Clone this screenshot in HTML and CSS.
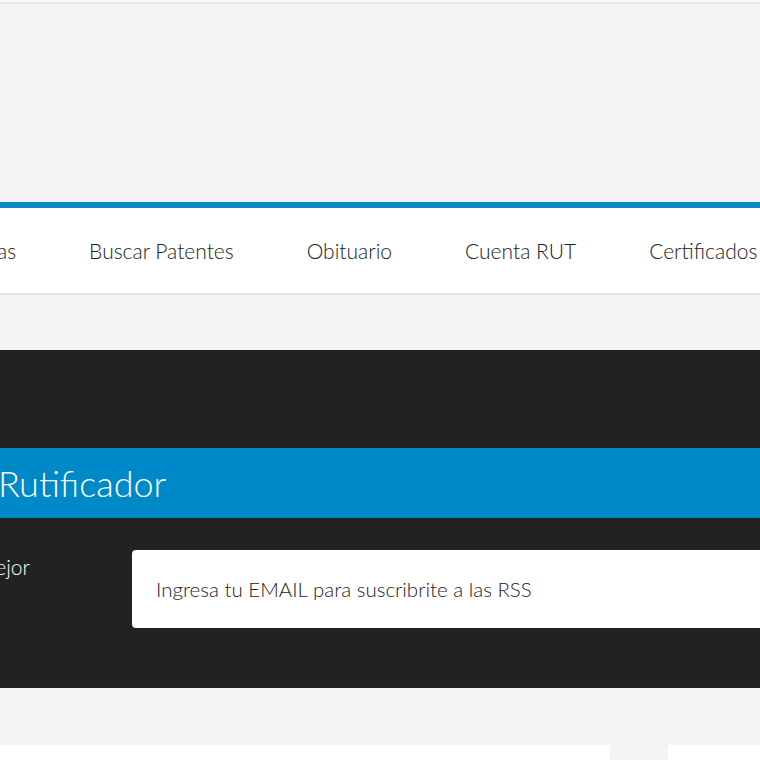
FILE: index.html
```html
<!DOCTYPE html>
<html lang="es">
<head>
<meta charset="utf-8">
<title>Rutificador</title>
<link rel="stylesheet" href="styles.css">
</head>
<body>
<div class="topline"></div>
<div class="header-space"></div>
<nav class="nav">
  <ul class="nav-list">
    <li class="nav-item"><a href="#">Empresas</a></li>
    <li class="nav-item"><a href="#">Buscar Patentes</a></li>
    <li class="nav-item"><a href="#">Obituario</a></li>
    <li class="nav-item"><a href="#">Cuenta RUT</a></li>
    <li class="nav-item"><a href="#">Certificados</a></li>
  </ul>
</nav>
<section class="footer-dark">
  <div class="brand-band"><h2 class="brand-title">Rutificador</h2></div>
  <div class="subscribe-row">
    <p class="subscribe-text">Suscríbete para estar mejor</p>
    <form class="subscribe-form"><input class="email-input" type="text" placeholder="Ingresa tu EMAIL para suscribrite a las RSS"></form>
  </div>
</section>
<div class="cards">
  <div class="card card-main"></div>
  <div class="card card-side"></div>
</div>
</body>
</html>
```

FILE: styles.css
```css
html, body {
  margin: 0;
  padding: 0;
}
body {
  background: #f4f4f4;
  font-family: "Lato", "Open Sans", "Liberation Sans", sans-serif;
  overflow: hidden;
  width: 760px;
  height: 760px;
}
.topline {
  height: 2px;
  background: #f9f9f9;
  border-bottom: 2px solid #e4e4e4;
}
.header-space {
  height: 198px;
}
.nav {
  background: #fff;
  border-top: 6px solid #0b87c8;
  height: 85px;
  box-shadow: 0 2px 0 #e6e6e6;
  overflow: hidden;
}
.nav-list {
  list-style: none;
  margin: 0 0 0 -70px;
  padding: 0;
  display: flex;
  gap: 73px;
  height: 100%;
  align-items: center;
  white-space: nowrap;
}
.nav-item a {
  color: #222;
  text-decoration: none;
  font-size: 21px;
  font-weight: 300;
}
.footer-dark {
  margin-top: 57px;
  background: #222;
  padding: 98px 0 60px;
  overflow: hidden;
}
.brand-band {
  background: #0089c8;
  height: 70px;
  display: flex;
  align-items: center;
}
.brand-title {
  margin: 0 0 0 -2px;
  color: #fff;
  font-size: 36px;
  font-weight: 300;
  white-space: nowrap;
}
.subscribe-row {
  display: flex;
  margin-top: 32px;
  gap: 0;
}
.subscribe-text {
  margin: 4px 0 0 -250px;
  width: 382px;
  flex: none;
  color: #fff;
  font-size: 21px;
  font-weight: 300;
  text-align: right;
  padding-right: 102px;
  box-sizing: border-box;
  white-space: nowrap;
}
.subscribe-form {
  flex: none;
  width: 700px;
  margin: 0;
}
.email-input {
  width: 100%;
  height: 78px;
  box-sizing: border-box;
  border: none;
  border-radius: 4px;
  background: #fff;
  padding: 0 24px;
  font-family: inherit;
  font-size: 20.5px;
  font-weight: 300;
  color: #222;
  outline: none;
}
.email-input::placeholder {
  color: #222;
  opacity: 1;
}
.cards {
  display: flex;
  gap: 58px;
  margin-top: 57px;
}
.card {
  background: #fff;
  height: 60px;
}
.card-main {
  width: 610px;
  flex: none;
}
.card-side {
  flex: 1;
}
```
